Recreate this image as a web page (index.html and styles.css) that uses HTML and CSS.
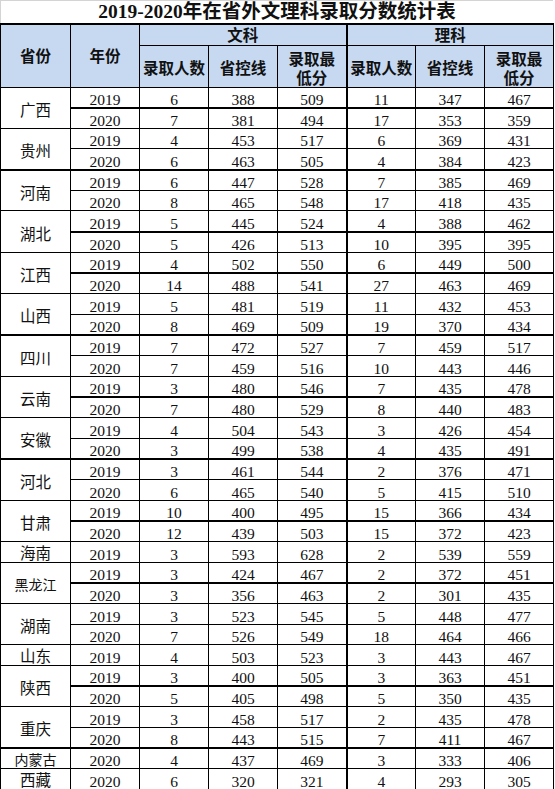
FILE: index.html
```html
<!DOCTYPE html>
<html lang="zh-CN">
<head>
<meta charset="utf-8">
<title>2019-2020年在省外文理科录取分数统计表</title>
<link rel="stylesheet" href="styles.css">
</head>
<body>
<div class="sheet">
  <div class="title">2019-2020年在省外文理科录取分数统计表</div>
  <table class="grid">
    <colgroup>
      <col class="c1"><col class="c"><col class="c"><col class="c"><col class="c s"><col class="c"><col class="c"><col class="c">
    </colgroup>
    <thead>
      <tr class="h1">
        <th rowspan="2">省份</th>
        <th rowspan="2">年份</th>
        <th colspan="3" class="s">文科</th>
        <th colspan="3">理科</th>
      </tr>
      <tr class="h2">
        <th>录取人数</th>
        <th>省控线</th>
        <th class="s">录取最<br>低分</th>
        <th>录取人数</th>
        <th>省控线</th>
        <th>录取最<br>低分</th>
      </tr>
    </thead>
    <tbody>
      <tr class="t"><td class="p" rowspan="2">广西</td><td>2019</td><td>6</td><td>388</td><td>509</td><td>11</td><td>347</td><td>467</td></tr>
      <tr><td>2020</td><td>7</td><td>381</td><td>494</td><td>17</td><td>353</td><td>359</td></tr>
      <tr><td class="p pt" rowspan="2">贵州</td><td>2019</td><td>4</td><td>453</td><td>517</td><td>6</td><td>369</td><td>431</td></tr>
      <tr class="t"><td>2020</td><td>6</td><td>463</td><td>505</td><td>4</td><td>384</td><td>423</td></tr>
      <tr><td class="p" rowspan="2">河南</td><td>2019</td><td>6</td><td>447</td><td>528</td><td>7</td><td>385</td><td>469</td></tr>
      <tr><td>2020</td><td>8</td><td>465</td><td>548</td><td>17</td><td>418</td><td>435</td></tr>
      <tr class="t"><td class="p" rowspan="2">湖北</td><td>2019</td><td>5</td><td>445</td><td>524</td><td>4</td><td>388</td><td>462</td></tr>
      <tr><td>2020</td><td>5</td><td>426</td><td>513</td><td>10</td><td>395</td><td>395</td></tr>
      <tr class="t"><td class="p" rowspan="2">江西</td><td>2019</td><td>4</td><td>502</td><td>550</td><td>6</td><td>449</td><td>500</td></tr>
      <tr><td>2020</td><td>14</td><td>488</td><td>541</td><td>27</td><td>463</td><td>469</td></tr>
      <tr><td class="p pt" rowspan="2">山西</td><td>2019</td><td>5</td><td>481</td><td>519</td><td>11</td><td>432</td><td>453</td></tr>
      <tr class="t"><td>2020</td><td>8</td><td>469</td><td>509</td><td>19</td><td>370</td><td>434</td></tr>
      <tr><td class="p" rowspan="2">四川</td><td>2019</td><td>7</td><td>472</td><td>527</td><td>7</td><td>459</td><td>517</td></tr>
      <tr><td>2020</td><td>7</td><td>459</td><td>516</td><td>10</td><td>443</td><td>446</td></tr>
      <tr class="t"><td class="p" rowspan="2">云南</td><td>2019</td><td>3</td><td>480</td><td>546</td><td>7</td><td>435</td><td>478</td></tr>
      <tr><td>2020</td><td>7</td><td>480</td><td>529</td><td>8</td><td>440</td><td>483</td></tr>
      <tr><td class="p pt" rowspan="2">安徽</td><td>2019</td><td>4</td><td>504</td><td>543</td><td>3</td><td>426</td><td>454</td></tr>
      <tr class="t"><td>2020</td><td>3</td><td>499</td><td>538</td><td>4</td><td>435</td><td>491</td></tr>
      <tr><td class="p" rowspan="2">河北</td><td>2019</td><td>3</td><td>461</td><td>544</td><td>2</td><td>376</td><td>471</td></tr>
      <tr><td>2020</td><td>6</td><td>465</td><td>540</td><td>5</td><td>415</td><td>510</td></tr>
      <tr class="t"><td class="p" rowspan="2">甘肃</td><td>2019</td><td>10</td><td>400</td><td>495</td><td>15</td><td>366</td><td>434</td></tr>
      <tr><td>2020</td><td>12</td><td>439</td><td>503</td><td>15</td><td>372</td><td>423</td></tr>
      <tr><td class="p one">海南</td><td>2019</td><td>3</td><td>593</td><td>628</td><td>2</td><td>539</td><td>559</td></tr>
      <tr class="t"><td class="p n3" rowspan="2">黑龙江</td><td>2019</td><td>3</td><td>424</td><td>467</td><td>2</td><td>372</td><td>451</td></tr>
      <tr><td>2020</td><td>3</td><td>356</td><td>463</td><td>2</td><td>301</td><td>435</td></tr>
      <tr><td class="p" rowspan="2">湖南</td><td>2019</td><td>3</td><td>523</td><td>545</td><td>5</td><td>448</td><td>477</td></tr>
      <tr><td>2020</td><td>7</td><td>526</td><td>549</td><td>18</td><td>464</td><td>466</td></tr>
      <tr><td class="p one">山东</td><td>2019</td><td>4</td><td>503</td><td>523</td><td>3</td><td>443</td><td>467</td></tr>
      <tr class="t"><td class="p" rowspan="2">陕西</td><td>2019</td><td>3</td><td>400</td><td>505</td><td>3</td><td>363</td><td>451</td></tr>
      <tr><td>2020</td><td>5</td><td>405</td><td>498</td><td>5</td><td>350</td><td>435</td></tr>
      <tr><td class="p pt" rowspan="2">重庆</td><td>2019</td><td>3</td><td>458</td><td>517</td><td>2</td><td>435</td><td>478</td></tr>
      <tr class="t"><td>2020</td><td>8</td><td>443</td><td>515</td><td>7</td><td>411</td><td>467</td></tr>
      <tr><td class="p one n3">内蒙古</td><td>2020</td><td>4</td><td>437</td><td>469</td><td>3</td><td>333</td><td>406</td></tr>
      <tr><td class="p one">西藏</td><td>2020</td><td>6</td><td>320</td><td>321</td><td>4</td><td>293</td><td>305</td></tr>
    </tbody>
  </table>
</div>
</body>
</html>
```

FILE: styles.css
```css
html, body {
  margin: 0;
  padding: 0;
  background: #ffffff;
}

.sheet {
  width: 553px;
}

.title {
  box-sizing: border-box;
  height: 23px;
  border-top: 1px solid #d4d4d4;
  border-left: 1px solid #d4d4d4;
  text-align: center;
  font-family: "Liberation Serif", "Noto Sans CJK SC", serif;
  font-weight: bold;
  font-size: 19.5px;
  line-height: 22px;
  color: #111;
  white-space: nowrap;
}

.grid {
  border-collapse: collapse;
  table-layout: fixed;
  width: 553px;
  color: #111;
}

.grid col.c1 { width: 70px; }
.grid col.c { width: 69px; }
.grid col.s { border-right: 2px solid #000; }

.grid th,
.grid td {
  border: 1px solid #000;
  padding: 0;
  text-align: center;
  white-space: nowrap;
}

.grid th {
  background: #c6d9f1;
  font-family: "Noto Sans CJK SC", sans-serif;
  font-weight: bold;
  font-size: 15.5px;
  line-height: 19px;
  vertical-align: middle;
}

.grid th.s { border-right: 2px solid #000; }

.grid tr.h1 { height: 21px; }
.grid tr.h1 th { border-top: 2px solid #000; }
.grid tr.h2 { height: 41px; }
.grid tr.h2 th { padding-top: 3px; }

.grid tbody tr { height: 20.67px; }

.grid td {
  font-family: "Liberation Serif", "Noto Sans CJK SC", serif;
  font-size: 15.5px;
  line-height: 15px;
  vertical-align: bottom;
}

.grid td.p {
  font-family: "Noto Sans CJK SC", sans-serif;
  font-size: 15.5px;
  vertical-align: middle;
  padding-top: 3px;
}

.grid td.one { padding-top: 1px; }

.grid td.n3 { font-size: 14px; }

.grid tr.t td:not(.p) { border-bottom-width: 2px; }
.grid td.pt { border-bottom-width: 2px; }
```
